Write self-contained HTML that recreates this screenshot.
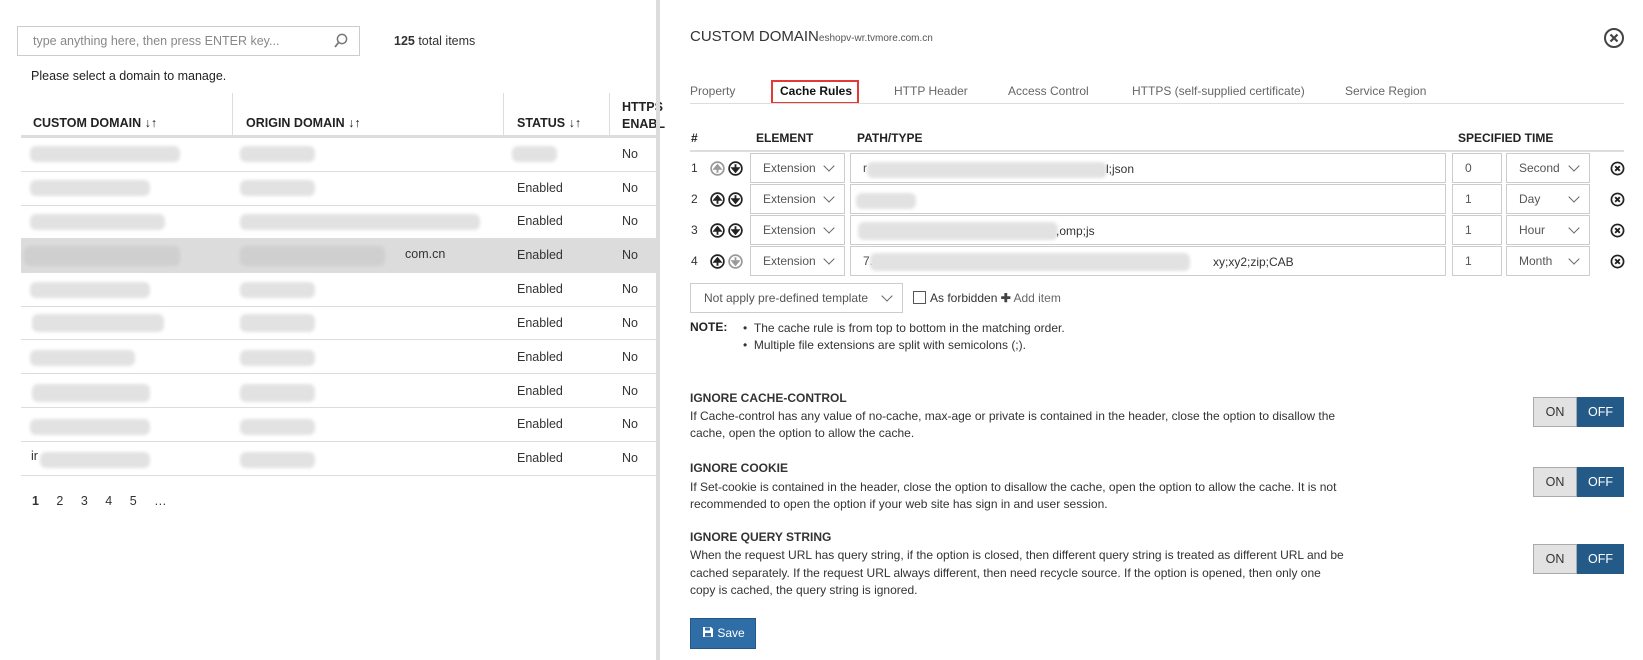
<!DOCTYPE html>
<html><head><meta charset="utf-8"><style>
*{box-sizing:border-box;margin:0;padding:0}
body{width:1643px;height:660px;position:relative;overflow:hidden;background:#fff;font-family:"Liberation Sans",sans-serif;font-size:12.5px;color:#333}
.a{position:absolute;white-space:nowrap}
.r{font-size:12px}
.b{font-weight:bold}
.blur{position:absolute;background:#e2e2e2;border-radius:6px;filter:blur(1.5px)}
.hl{position:absolute;left:21px;width:636px;height:1px;background:#ddd}
.box{position:absolute;border:1px solid #ccc;background:#fff}
.sel{position:absolute;border:1px solid #ccc;padding-left:12px;color:#555;line-height:29px;font-size:12px}
.chev{position:absolute;width:8px;height:8px;border-right:1.2px solid #666;border-bottom:1.2px solid #666;transform:rotate(45deg)}
.ic{position:absolute;width:15px;height:15px}
.tog{position:absolute;width:91px;height:30px;display:flex;font-size:12.5px}
.tog .on{width:44px;background:#e2e2e2;border:1px solid #aaa;text-align:center;line-height:28px;color:#333}
.tog .off{flex:1;background:#245a88;color:#fff;text-align:center;line-height:30px}
</style></head><body>
<svg width="0" height="0" style="position:absolute"><defs>
<symbol id="up" viewBox="0 0 16 16"><circle cx="8" cy="8" r="6.8" fill="none" stroke="currentColor" stroke-width="1.8"/><path d="M8 12.5V5.5M4.8 8.3L8 4.5L11.2 8.3Z" stroke="currentColor" stroke-width="2" fill="currentColor"/></symbol>
<symbol id="dn" viewBox="0 0 16 16"><circle cx="8" cy="8" r="6.8" fill="none" stroke="currentColor" stroke-width="1.8"/><path d="M8 3.5V10.5M4.8 7.7L8 11.5L11.2 7.7Z" stroke="currentColor" stroke-width="2" fill="currentColor"/></symbol>
<symbol id="x" viewBox="0 0 16 16"><circle cx="8" cy="8" r="6.5" fill="none" stroke="#222" stroke-width="1.8"/><path d="M5.5 5.5L10.5 10.5M10.5 5.5L5.5 10.5" stroke="#222" stroke-width="2"/></symbol>
</defs></svg>
<!-- left panel -->
<div class="box" style="left:17px;top:26px;width:343px;height:30px;border-color:#ccc"></div>
<div class="a" style="left:33px;top:34px;color:#888;font-size:12.5px">type anything here, then press ENTER key...</div>
<svg class="a" style="left:333px;top:33px" width="16" height="16" viewBox="0 0 16 16"><circle cx="9" cy="6" r="4.6" fill="none" stroke="#777" stroke-width="1.5"/><path d="M6 9 L2 14" stroke="#777" stroke-width="1.8"/></svg>
<div class="a" style="left:394px;top:34px"><b>125</b> total items</div>
<div class="a" style="left:31px;top:69px;color:#222">Please select a domain to manage.</div>
<div class="a" style="left:232px;top:93px;width:1px;height:44px;background:#ddd"></div>
<div class="a" style="left:503px;top:93px;width:1px;height:44px;background:#ddd"></div>
<div class="a" style="left:609px;top:93px;width:1px;height:44px;background:#ddd"></div>
<div class="a b" style="left:33px;top:116px;font-size:12.5px;color:#222">CUSTOM DOMAIN ↓↑</div>
<div class="a b" style="left:246px;top:116px;color:#222">ORIGIN DOMAIN ↓↑</div>
<div class="a b" style="left:517px;top:116px;color:#222">STATUS ↓↑</div>
<div class="a b" style="left:622px;top:99px;color:#222;line-height:17px">HTTPS<br>ENABL</div>
<div class="a" style="left:21px;top:135px;width:636px;height:3px;background:#ddd"></div>
<div class="a" style="left:21px;top:238px;width:636px;height:34px;background:#dcdcdc"></div>
<div class="hl" style="top:171px"></div><div class="hl" style="top:205px"></div><div class="hl" style="top:238px"></div><div class="hl" style="top:272px"></div><div class="hl" style="top:306px"></div><div class="hl" style="top:339px"></div><div class="hl" style="top:373px"></div><div class="hl" style="top:407px"></div><div class="hl" style="top:441px"></div><div class="hl" style="top:475px"></div>
<div class="blur" style="left:30px;top:146px;width:150px;height:16px"></div><div class="blur" style="left:240px;top:146px;width:75px;height:16px"></div><div class="blur" style="left:512px;top:146px;width:45px;height:16px"></div>
<div class="blur" style="left:30px;top:180px;width:120px;height:16px"></div><div class="blur" style="left:240px;top:180px;width:75px;height:16px"></div>
<div class="blur" style="left:30px;top:214px;width:135px;height:16px"></div><div class="blur" style="left:240px;top:214px;width:240px;height:16px"></div>
<div class="blur" style="left:24px;top:246px;width:156px;height:20px;background:#cfcfcf"></div><div class="blur" style="left:240px;top:246px;width:145px;height:20px;background:#cfcfcf"></div>
<div class="blur" style="left:30px;top:282px;width:120px;height:16px"></div><div class="blur" style="left:240px;top:282px;width:75px;height:16px"></div>
<div class="blur" style="left:32px;top:314px;width:132px;height:18px"></div><div class="blur" style="left:240px;top:314px;width:75px;height:18px"></div>
<div class="blur" style="left:30px;top:350px;width:105px;height:16px"></div><div class="blur" style="left:240px;top:350px;width:75px;height:16px"></div>
<div class="blur" style="left:32px;top:384px;width:118px;height:18px"></div><div class="blur" style="left:240px;top:384px;width:75px;height:18px"></div>
<div class="blur" style="left:30px;top:419px;width:120px;height:16px"></div><div class="blur" style="left:240px;top:419px;width:75px;height:16px"></div>
<div class="blur" style="left:40px;top:452px;width:110px;height:16px"></div><div class="blur" style="left:240px;top:452px;width:75px;height:16px"></div>
<div class="a" style="left:405px;top:247px">com.cn</div>
<div class="a" style="left:31px;top:449px">ir</div>
<div class="a" style="left:622px;top:147px">No</div>
<div class="a" style="left:517px;top:181px">Enabled</div><div class="a" style="left:622px;top:181px">No</div>
<div class="a" style="left:517px;top:214px">Enabled</div><div class="a" style="left:622px;top:214px">No</div>
<div class="a" style="left:517px;top:248px">Enabled</div><div class="a" style="left:622px;top:248px">No</div>
<div class="a" style="left:517px;top:282px">Enabled</div><div class="a" style="left:622px;top:282px">No</div>
<div class="a" style="left:517px;top:316px">Enabled</div><div class="a" style="left:622px;top:316px">No</div>
<div class="a" style="left:517px;top:350px">Enabled</div><div class="a" style="left:622px;top:350px">No</div>
<div class="a" style="left:517px;top:384px">Enabled</div><div class="a" style="left:622px;top:384px">No</div>
<div class="a" style="left:517px;top:417px">Enabled</div><div class="a" style="left:622px;top:417px">No</div>
<div class="a" style="left:517px;top:451px">Enabled</div><div class="a" style="left:622px;top:451px">No</div>
<div class="a" style="left:32px;top:494px;word-spacing:14px"><b>1</b> 2 3 4 5 …</div>
<div class="a" style="left:656px;top:0;width:4px;height:660px;background:#dcdcdc"></div>
<!-- right panel -->
<div class="a" style="left:690px;top:28px;font-size:15px;color:#333">CUSTOM DOMAIN<span style="font-size:10px;color:#555">eshopv-wr.tvmore.com.cn</span></div>
<svg class="a" style="left:1603px;top:27px" width="22" height="22" viewBox="0 0 22 22"><circle cx="11" cy="11" r="9" fill="none" stroke="#444" stroke-width="2"/><path d="M7.5 7.5L14.5 14.5M14.5 7.5L7.5 14.5" stroke="#444" stroke-width="2.2"/></svg>
<div class="a r" style="left:690px;top:84px;color:#666">Property</div>
<div class="a" style="left:771px;top:80px;width:88px;height:24px;border:2px solid #e53935"></div>
<div class="a b r" style="left:780px;top:84px;color:#111">Cache Rules</div>
<div class="a r" style="left:894px;top:84px;color:#666">HTTP Header</div>
<div class="a r" style="left:1008px;top:84px;color:#666">Access Control</div>
<div class="a r" style="left:1132px;top:84px;color:#666">HTTPS (self-supplied certificate)</div>
<div class="a r" style="left:1345px;top:84px;color:#666">Service Region</div>
<div class="a" style="left:690px;top:103px;width:934px;height:1px;background:#ddd"></div>
<div class="a b r" style="left:691px;top:131px;color:#222">#</div>
<div class="a b r" style="left:756px;top:131px;color:#222">ELEMENT</div>
<div class="a b r" style="left:857px;top:131px;color:#222">PATH/TYPE</div>
<div class="a b r" style="left:1458px;top:131px;color:#222">SPECIFIED TIME</div>
<div class="a" style="left:690px;top:150px;width:934px;height:2px;background:#ddd"></div>
<div class="a r" style="left:691px;top:161px">1</div>
<div class="a r" style="left:691px;top:192px">2</div>
<div class="a r" style="left:691px;top:223px">3</div>
<div class="a r" style="left:691px;top:254px">4</div>
<svg class="ic" style="left:710px;top:161px;color:#999"><use href="#up"/></svg><svg class="ic" style="left:728px;top:161px;color:#222"><use href="#dn"/></svg>
<svg class="ic" style="left:710px;top:192px;color:#222"><use href="#up"/></svg><svg class="ic" style="left:728px;top:192px;color:#222"><use href="#dn"/></svg>
<svg class="ic" style="left:710px;top:223px;color:#222"><use href="#up"/></svg><svg class="ic" style="left:728px;top:223px;color:#222"><use href="#dn"/></svg>
<svg class="ic" style="left:710px;top:254px;color:#222"><use href="#up"/></svg><svg class="ic" style="left:728px;top:254px;color:#999"><use href="#dn"/></svg>
<div class="sel" style="left:750px;top:153px;width:95px;height:30px">Extension</div><div class="chev" style="left:825px;top:162px"></div>
<div class="sel" style="left:750px;top:184px;width:95px;height:30px">Extension</div><div class="chev" style="left:825px;top:193px"></div>
<div class="sel" style="left:750px;top:215px;width:95px;height:30px">Extension</div><div class="chev" style="left:825px;top:224px"></div>
<div class="sel" style="left:750px;top:246px;width:95px;height:30px">Extension</div><div class="chev" style="left:825px;top:255px"></div>
<div class="sel" style="left:850px;top:153px;width:596px;height:30px;color:#444">r</div>
<div class="sel" style="left:850px;top:184px;width:596px;height:30px"></div>
<div class="sel" style="left:850px;top:215px;width:596px;height:30px"></div>
<div class="sel" style="left:850px;top:246px;width:596px;height:30px;color:#444">7.</div>
<div class="blur" style="left:867px;top:162px;width:240px;height:16px"></div><div class="a r" style="left:1106px;top:162px">l;json</div>
<div class="blur" style="left:856px;top:193px;width:60px;height:16px"></div>
<div class="blur" style="left:858px;top:222px;width:200px;height:18px"></div><div class="a r" style="left:1056px;top:224px">,omp;js</div>
<div class="blur" style="left:870px;top:253px;width:320px;height:18px"></div><div class="a r" style="left:1213px;top:255px">xy;xy2;zip;CAB</div>
<div class="sel" style="left:1452px;top:153px;width:50px;height:30px">0</div>
<div class="sel" style="left:1452px;top:184px;width:50px;height:30px">1</div>
<div class="sel" style="left:1452px;top:215px;width:50px;height:30px">1</div>
<div class="sel" style="left:1452px;top:246px;width:50px;height:30px">1</div>
<div class="sel" style="left:1506px;top:153px;width:84px;height:30px">Second</div><div class="chev" style="left:1570px;top:162px"></div>
<div class="sel" style="left:1506px;top:184px;width:84px;height:30px">Day</div><div class="chev" style="left:1570px;top:193px"></div>
<div class="sel" style="left:1506px;top:215px;width:84px;height:30px">Hour</div><div class="chev" style="left:1570px;top:224px"></div>
<div class="sel" style="left:1506px;top:246px;width:84px;height:30px">Month</div><div class="chev" style="left:1570px;top:255px"></div>
<svg class="ic" style="left:1610px;top:161px"><use href="#x"/></svg>
<svg class="ic" style="left:1610px;top:192px"><use href="#x"/></svg>
<svg class="ic" style="left:1610px;top:223px"><use href="#x"/></svg>
<svg class="ic" style="left:1610px;top:254px"><use href="#x"/></svg>
<div class="sel" style="left:690px;top:283px;width:213px;height:30px;color:#555;padding-left:13px">Not apply pre-defined template</div><div class="chev" style="left:883px;top:292px"></div>
<div class="a" style="left:913px;top:291px;width:13px;height:13px;border:1px solid #555"></div>
<div class="a r" style="left:930px;top:291px;color:#333">As forbidden <b style="color:#444">✚</b> <span style="color:#666">Add item</span></div>
<div class="a b r" style="left:690px;top:320px;color:#222">NOTE:</div>
<div class="a r" style="left:743px;top:320px;line-height:17px">•&nbsp;&nbsp;The cache rule is from top to bottom in the matching order.<br>•&nbsp;&nbsp;Multiple file extensions are split with semicolons (;).</div>
<div class="a b r" style="left:690px;top:391px;color:#333">IGNORE CACHE-CONTROL</div>
<div class="a r" style="left:690px;top:408px;line-height:17px;color:#333">If Cache-control has any value of no-cache, max-age or private is contained in the header, close the option to disallow the<br>cache, open the option to allow the cache.</div>
<div class="a b r" style="left:690px;top:461px;color:#333">IGNORE COOKIE</div>
<div class="a r" style="left:690px;top:479px;line-height:17px;color:#333">If Set-cookie is contained in the header, close the option to disallow the cache, open the option to allow the cache. It is not<br>recommended to open the option if your web site has sign in and user session.</div>
<div class="a b r" style="left:690px;top:530px;color:#333">IGNORE QUERY STRING</div>
<div class="a r" style="left:690px;top:547px;line-height:17.5px;color:#333">When the request URL has query string, if the option is closed, then different query string is treated as different URL and be<br>cached separately. If the request URL always different, then need recycle source. If the option is opened, then only one<br>copy is cached, the query string is ignored.</div>
<div class="tog" style="left:1533px;top:397px"><div class="on">ON</div><div class="off">OFF</div></div>
<div class="tog" style="left:1533px;top:467px"><div class="on">ON</div><div class="off">OFF</div></div>
<div class="tog" style="left:1533px;top:544px"><div class="on">ON</div><div class="off">OFF</div></div>
<div class="a r" style="left:690px;top:618px;width:66px;height:31px;background:#2e6da6;border:1px solid #23578a;color:#fff;line-height:29px;padding-left:11px"><svg width="12" height="12" viewBox="0 0 12 12" style="vertical-align:-1px"><path d="M1 1H9L11 3V11H1Z" fill="#fff"/><rect x="3" y="1.5" width="5" height="3" fill="#2e6da6"/><rect x="3" y="7" width="6" height="3.5" fill="#2e6da6"/></svg> Save</div>
</body></html>
